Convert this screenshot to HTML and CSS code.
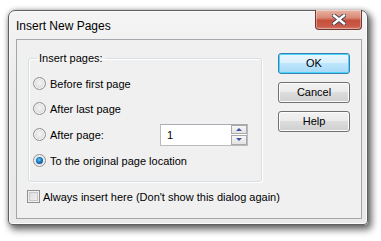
FILE: index.html
```html
<!DOCTYPE html>
<html>
<head>
<meta charset="utf-8">
<link rel="stylesheet" href="styles.css">
</head>
<body>
<div class="window">
  <div class="titlebar">
    <span class="title">Insert New Pages</span>
    <div class="close">
      <svg width="14" height="11" viewBox="0 0 14 11">
        <path d="M2 1.5 L12 9.5 M12 1.5 L2 9.5" stroke="#3a3f52" stroke-width="4.2" stroke-linecap="square"/>
        <path d="M2 1.5 L12 9.5 M12 1.5 L2 9.5" stroke="#ffffff" stroke-width="2.4" stroke-linecap="square"/>
      </svg>
    </div>
  </div>
  <div class="client">
    <div class="left">
      <fieldset class="group">
        <legend>Insert pages:</legend>
        <div class="row"><span class="radio"></span><span>Before first page</span></div>
        <div class="row"><span class="radio"></span><span>After last page</span></div>
        <div class="row row-spin"><span class="radio"></span><span>After page:</span>
          <div class="spin">
            <span class="spin-value">1</span>
            <div class="spin-btns">
              <div class="spin-btn"><span class="arrow-up"></span></div>
              <div class="spin-btn"><span class="arrow-down"></span></div>
            </div>
          </div>
        </div>
        <div class="row"><span class="radio checked"></span><span>To the original page location</span></div>
      </fieldset>
      <div class="check-row"><span class="checkbox"></span><span>Always insert here (Don't show this dialog again)</span></div>
    </div>
    <div class="buttons">
      <div class="btn default">OK</div>
      <div class="btn">Cancel</div>
      <div class="btn">Help</div>
    </div>
  </div>
</div>
</body>
</html>
```
FILE: styles.css
```css
html, body {
  margin: 0;
  padding: 0;
  background: #ffffff;
}
body {
  width: 381px;
  height: 241px;
  overflow: hidden;
  font-family: "Liberation Sans", Arial, sans-serif;
  font-size: 11px;
  color: #000;
}
.window {
  box-sizing: border-box;
  margin: 10px 0 0 8px;
  width: 360px;
  height: 215px;
  border: 1px solid #5d5f62;
  border-radius: 7px 7px 4px 4px;
  background: linear-gradient(#f4f4f4, #ebebeb 40%, #e9e9e9);
  padding: 0 5px 5px 7px;
  box-shadow: 3px 4px 7px 1px rgba(0,0,0,0.55), 0 0 5px rgba(0,0,0,0.25), inset 0 0 0 1px #fbfbfb;
}
.titlebar {
  height: 28px;
  display: flex;
  align-items: center;
}
.title {
  flex: 1;
  font-size: 12px;
  line-height: 16px;
  margin-top: 2px;
}
.close {
  align-self: flex-start;
  margin-top: -1px;
  box-sizing: border-box;
  width: 47px;
  height: 20px;
  border: 1px solid #6f3a31;
  border-top: none;
  border-radius: 0 0 4px 4px;
  background: linear-gradient(#e9b3a4, #d98a77 40%, #c5503b 55%, #c9594a 85%, #d57c6a);
  display: flex;
  align-items: center;
  justify-content: center;
  box-shadow: inset 0 0 0 1px rgba(255,255,255,0.35);
}
.close svg { display: block; }
.client {
  box-sizing: border-box;
  height: 180px;
  border: 1px solid #a3a6aa;
  background: #f0f0f0;
  display: flex;
  align-items: flex-start;
  padding: 11px 11px 0 11px;
  gap: 16px;
}
.left {
  width: 234px;
  display: flex;
  flex-direction: column;
}
.group {
  margin: 0;
  padding: 6px 13px 8px 4px;
  border: 1px solid #d5dfe5;
  border-radius: 3px;
  box-shadow: inset 1px 1px 0 #fff, 1px 1px 0 #fff;
  min-width: 0;
}
.group legend {
  padding: 0 2px;
  margin-left: 4px;
  line-height: 14px;
}
.row {
  height: 25px;
  display: flex;
  align-items: center;
  gap: 4px;
  white-space: nowrap;
}
.row-spin {
  height: 27px;
}
.radio {
  box-sizing: border-box;
  width: 13px;
  height: 13px;
  border-radius: 50%;
  border: 1px solid #8f9091;
  background: radial-gradient(circle at 50% 45%, #f6f6f6 0, #e2e2e2 50%, #cfcfcf 100%);
  box-shadow: inset 0 0 0 1px #f4f4f4;
  flex: none;
  position: relative;
}
.radio.checked::after {
  content: "";
  position: absolute;
  left: 2px;
  top: 2px;
  width: 7px;
  height: 7px;
  border-radius: 50%;
  background: radial-gradient(circle at 45% 40%, #68c8f4 0, #1a76c0 45%, #0a3d7a 100%);
}
.spin {
  margin-left: auto;
  box-sizing: border-box;
  width: 88px;
  height: 22px;
  border: 1px solid #b8bcc1;
  border-top-color: #a8acb2;
  background: #fff;
  display: flex;
  align-items: center;
}
.spin-value {
  flex: 1;
  padding-left: 6px;
}
.spin-btns {
  align-self: stretch;
  width: 16px;
  display: flex;
  flex-direction: column;
  gap: 1px;
  background: #fff;
}
.spin-btn {
  flex: 1;
  box-sizing: border-box;
  border: 1px solid #a9a9a9;
  background: linear-gradient(#f7f7f7, #e3e3e3);
  display: flex;
  align-items: center;
  justify-content: center;
}
.arrow-up, .arrow-down {
  width: 0;
  height: 0;
  border-left: 3px solid transparent;
  border-right: 3px solid transparent;
}
.arrow-up { border-bottom: 3px solid #3d54a0; }
.arrow-down { border-top: 3px solid #3d54a0; }
.check-row {
  margin-top: 7px;
  height: 15px;
  display: flex;
  align-items: center;
  gap: 3px;
  margin-left: -1px;
  white-space: nowrap;
}
.checkbox {
  box-sizing: border-box;
  width: 13px;
  height: 13px;
  border: 1px solid #8f8f8f;
  background: linear-gradient(135deg, #d9d9d9, #f4f4f4);
  box-shadow: inset 0 0 0 1px #f0f0f0, inset 0 0 0 2px #c8c8c8;
  flex: none;
}
.buttons {
  margin-top: 2px;
  width: 72px;
  display: flex;
  flex-direction: column;
  gap: 8px;
}
.btn {
  box-sizing: border-box;
  height: 21px;
  border: 1px solid #707070;
  border-radius: 3px;
  background: linear-gradient(#f2f2f2 0, #ebebeb 45%, #dddddd 50%, #cfcfcf 100%);
  box-shadow: inset 0 0 0 1px #fcfcfc;
  display: flex;
  align-items: center;
  justify-content: center;
  line-height: 15px;
}
.btn.default {
  border-color: #3c7fb1;
  background: linear-gradient(#eaf6fd 0, #d9f0fc 45%, #bee6fd 50%, #a7d9f5 100%);
  box-shadow: inset 0 0 0 1px #48d7fb;
}
```
